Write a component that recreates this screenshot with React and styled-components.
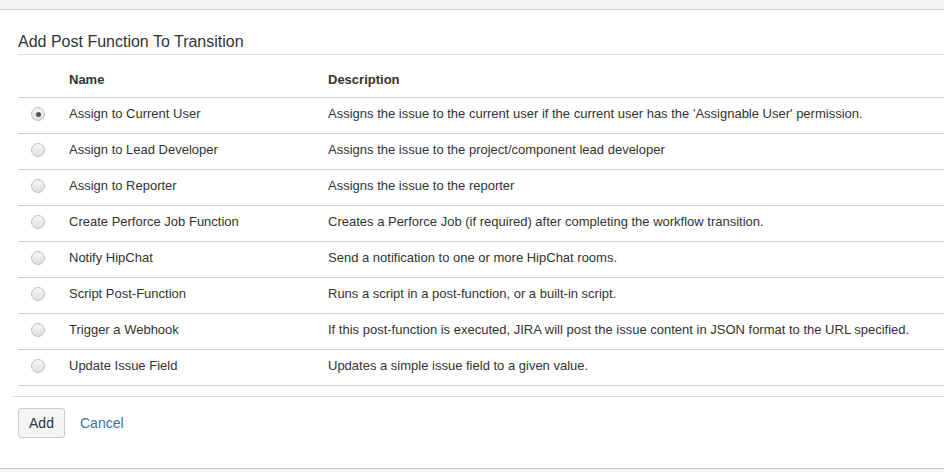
import React, { useState } from 'react';
import styled, { createGlobalStyle } from 'styled-components';

const GlobalStyle = createGlobalStyle`
  body {
    margin: 0;
    background: #fff;
    font-family: "Liberation Sans", Arial, sans-serif;
    font-size: 13px;
    color: #333;
  }
`;

const Page = styled.div`
  height: 472px;
  display: flex;
  flex-direction: column;
  overflow: hidden;
`;

const TopBar = styled.div`
  height: 9px;
  background: #f5f5f5;
  border-bottom: 1px solid #ccc;
  flex-shrink: 0;
`;

const Dialog = styled.div`
  flex: 1;
  padding-left: 13px;
`;

const Heading = styled.h2`
  margin: 22px 0 0 5px;
  padding-bottom: 2px;
  font-size: 16px;
  font-weight: normal;
  line-height: 20px;
  color: #333;
  border-bottom: 1px solid #ddd;
`;

const Table = styled.table`
  margin: 7px 0 0 5px;
  width: calc(100% - 5px);
  border-collapse: collapse;
  table-layout: fixed;
`;

const HeadCell = styled.th`
  box-sizing: border-box;
  text-align: left;
  font-weight: bold;
  height: 35px;
  padding: 1px 10px 0;
  border-bottom: 1px solid #ccc;
  vertical-align: middle;
`;

const Row = styled.tr`
  border-bottom: 1px solid #ccc;
  cursor: pointer;
`;

const Cell = styled.td`
  height: 32px;
  padding: 0 10px 3px;
  vertical-align: middle;
  white-space: nowrap;
`;

const RadioCell = styled(Cell)`
  padding: 0 0 2px 13px;
`;

const Radio = styled.span`
  display: block;
  width: 12px;
  height: 12px;
  border-radius: 50%;
  border: 1px solid #bdbdbd;
  background: linear-gradient(#f6f6f6, #e0e0e0);
  position: relative;

  &::after {
    content: '';
    display: ${(p) => (p.checked ? 'block' : 'none')};
    position: absolute;
    left: 3.5px;
    top: 3.5px;
    width: 5px;
    height: 5px;
    border-radius: 50%;
    background: #555;
  }
`;

const Footer = styled.div`
  margin-top: 10px;
  border-top: 1px solid #ddd;
  padding: 11px 0 0 5px;
  display: flex;
  align-items: center;
  gap: 15px;
`;

const Button = styled.button`
  font-family: inherit;
  font-size: 14px;
  color: #333;
  height: 30px;
  width: 47px;
  padding: 0;
  background: #f5f5f5;
  border: 1px solid #ccc;
  border-radius: 3px;
  cursor: pointer;
`;

const CancelLink = styled.a`
  color: #3b73af;
  font-size: 14px;
  text-decoration: none;
  cursor: pointer;
`;

const BottomBar = styled.div`
  height: 3px;
  background: #f5f5f5;
  border-top: 1px solid #ccc;
  flex-shrink: 0;
`;

const functions = [
  ['Assign to Current User', "Assigns the issue to the current user if the current user has the 'Assignable User' permission."],
  ['Assign to Lead Developer', 'Assigns the issue to the project/component lead developer'],
  ['Assign to Reporter', 'Assigns the issue to the reporter'],
  ['Create Perforce Job Function', 'Creates a Perforce Job (if required) after completing the workflow transition.'],
  ['Notify HipChat', 'Send a notification to one or more HipChat rooms.'],
  ['Script Post-Function', 'Runs a script in a post-function, or a built-in script.'],
  ['Trigger a Webhook', 'If this post-function is executed, JIRA will post the issue content in JSON format to the URL specified.'],
  ['Update Issue Field', 'Updates a simple issue field to a given value.'],
];

function App() {
  const [selected, setSelected] = useState(0);

  return (
    <Page>
      <GlobalStyle />
      <TopBar />
      <Dialog>
        <Heading>Add Post Function To Transition</Heading>
        <Table>
          <colgroup>
            <col style={{ width: 41 }} />
            <col style={{ width: 259 }} />
            <col />
          </colgroup>
          <thead>
            <tr>
              <HeadCell />
              <HeadCell>Name</HeadCell>
              <HeadCell>Description</HeadCell>
            </tr>
          </thead>
          <tbody>
            {functions.map(([name, desc], i) => (
              <Row key={name} onClick={() => setSelected(i)}>
                <RadioCell>
                  <Radio checked={selected === i} />
                </RadioCell>
                <Cell>{name}</Cell>
                <Cell>{desc}</Cell>
              </Row>
            ))}
          </tbody>
        </Table>
        <Footer>
          <Button>Add</Button>
          <CancelLink>Cancel</CancelLink>
        </Footer>
      </Dialog>
      <BottomBar />
    </Page>
  );
}

export default App;
